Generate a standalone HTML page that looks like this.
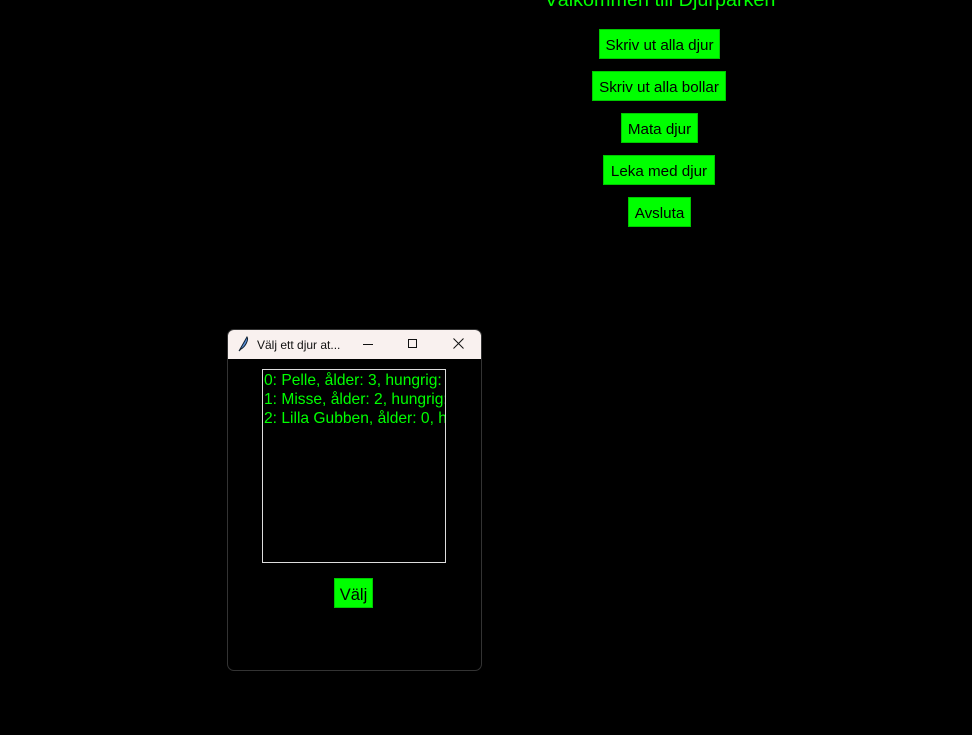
<!DOCTYPE html>
<html><head><style>
body{margin:0;width:972px;height:735px;background:#000;position:relative;overflow:hidden;font-family:"Liberation Sans",sans-serif}
.b{position:absolute;background:#00ff00;color:#000;font-size:15.2px;line-height:32px;height:30px;text-align:center;box-sizing:border-box;border:1px solid #00c800}
.t{position:absolute;left:520px;width:280px;top:-11px;text-align:center;color:#00ff00;font-size:19.8px}
.win{position:absolute;left:227px;top:329px;width:255px;height:342px;border:1px solid #333;border-radius:7px;box-sizing:border-box;overflow:hidden;background:#000}
.tb{height:29px;background:#f9f1ef;position:relative;font-size:12px;color:#111}
.lb{position:absolute;left:34px;top:39px;width:184px;height:194px;border:1px solid #ddd;box-sizing:border-box;overflow:hidden;color:#00ff00;font-size:15.6px;line-height:19px;white-space:nowrap;padding:1px 0 0 1px}
</style></head><body>
<div class="t">Välkommen till Djurparken</div>
<div class="b" style="left:599px;top:29px;width:121px">Skriv ut alla djur</div>
<div class="b" style="left:592px;top:71px;width:134px">Skriv ut alla bollar</div>
<div class="b" style="left:621px;top:113px;width:77px">Mata djur</div>
<div class="b" style="left:603px;top:155px;width:112px">Leka med djur</div>
<div class="b" style="left:628px;top:197px;width:63px">Avsluta</div>
<div class="win">
<div class="tb">
<svg style="position:absolute;left:9px;top:6px" width="12" height="16" viewBox="0 0 12 16"><path d="M2 15 L10 1 C12 4 8 11 4 13 Z" fill="#5a8fd8" stroke="#123" stroke-width="1"/></svg>
<span style="position:absolute;left:29px;top:8px">Välj ett djur at...</span>
<div style="position:absolute;left:135px;top:14px;width:10px;height:1px;background:#111"></div>
<div style="position:absolute;left:180px;top:9px;width:9px;height:9px;border:1px solid #111;box-sizing:border-box"></div>
<svg style="position:absolute;left:225px;top:8px" width="11" height="11"><path d="M0.5 0.5L10.5 10.5M10.5 0.5L0.5 10.5" stroke="#111"/></svg>
</div>
<div class="lb">0: Pelle, ålder: 3, hungrig: ja<br>1: Misse, ålder: 2, hungrig: nej<br>2: Lilla Gubben, ålder: 0, hungrig</div>
<div class="b" style="left:106px;top:248px;width:39px;font-size:16.5px">Välj</div>
</div>
</body></html>
